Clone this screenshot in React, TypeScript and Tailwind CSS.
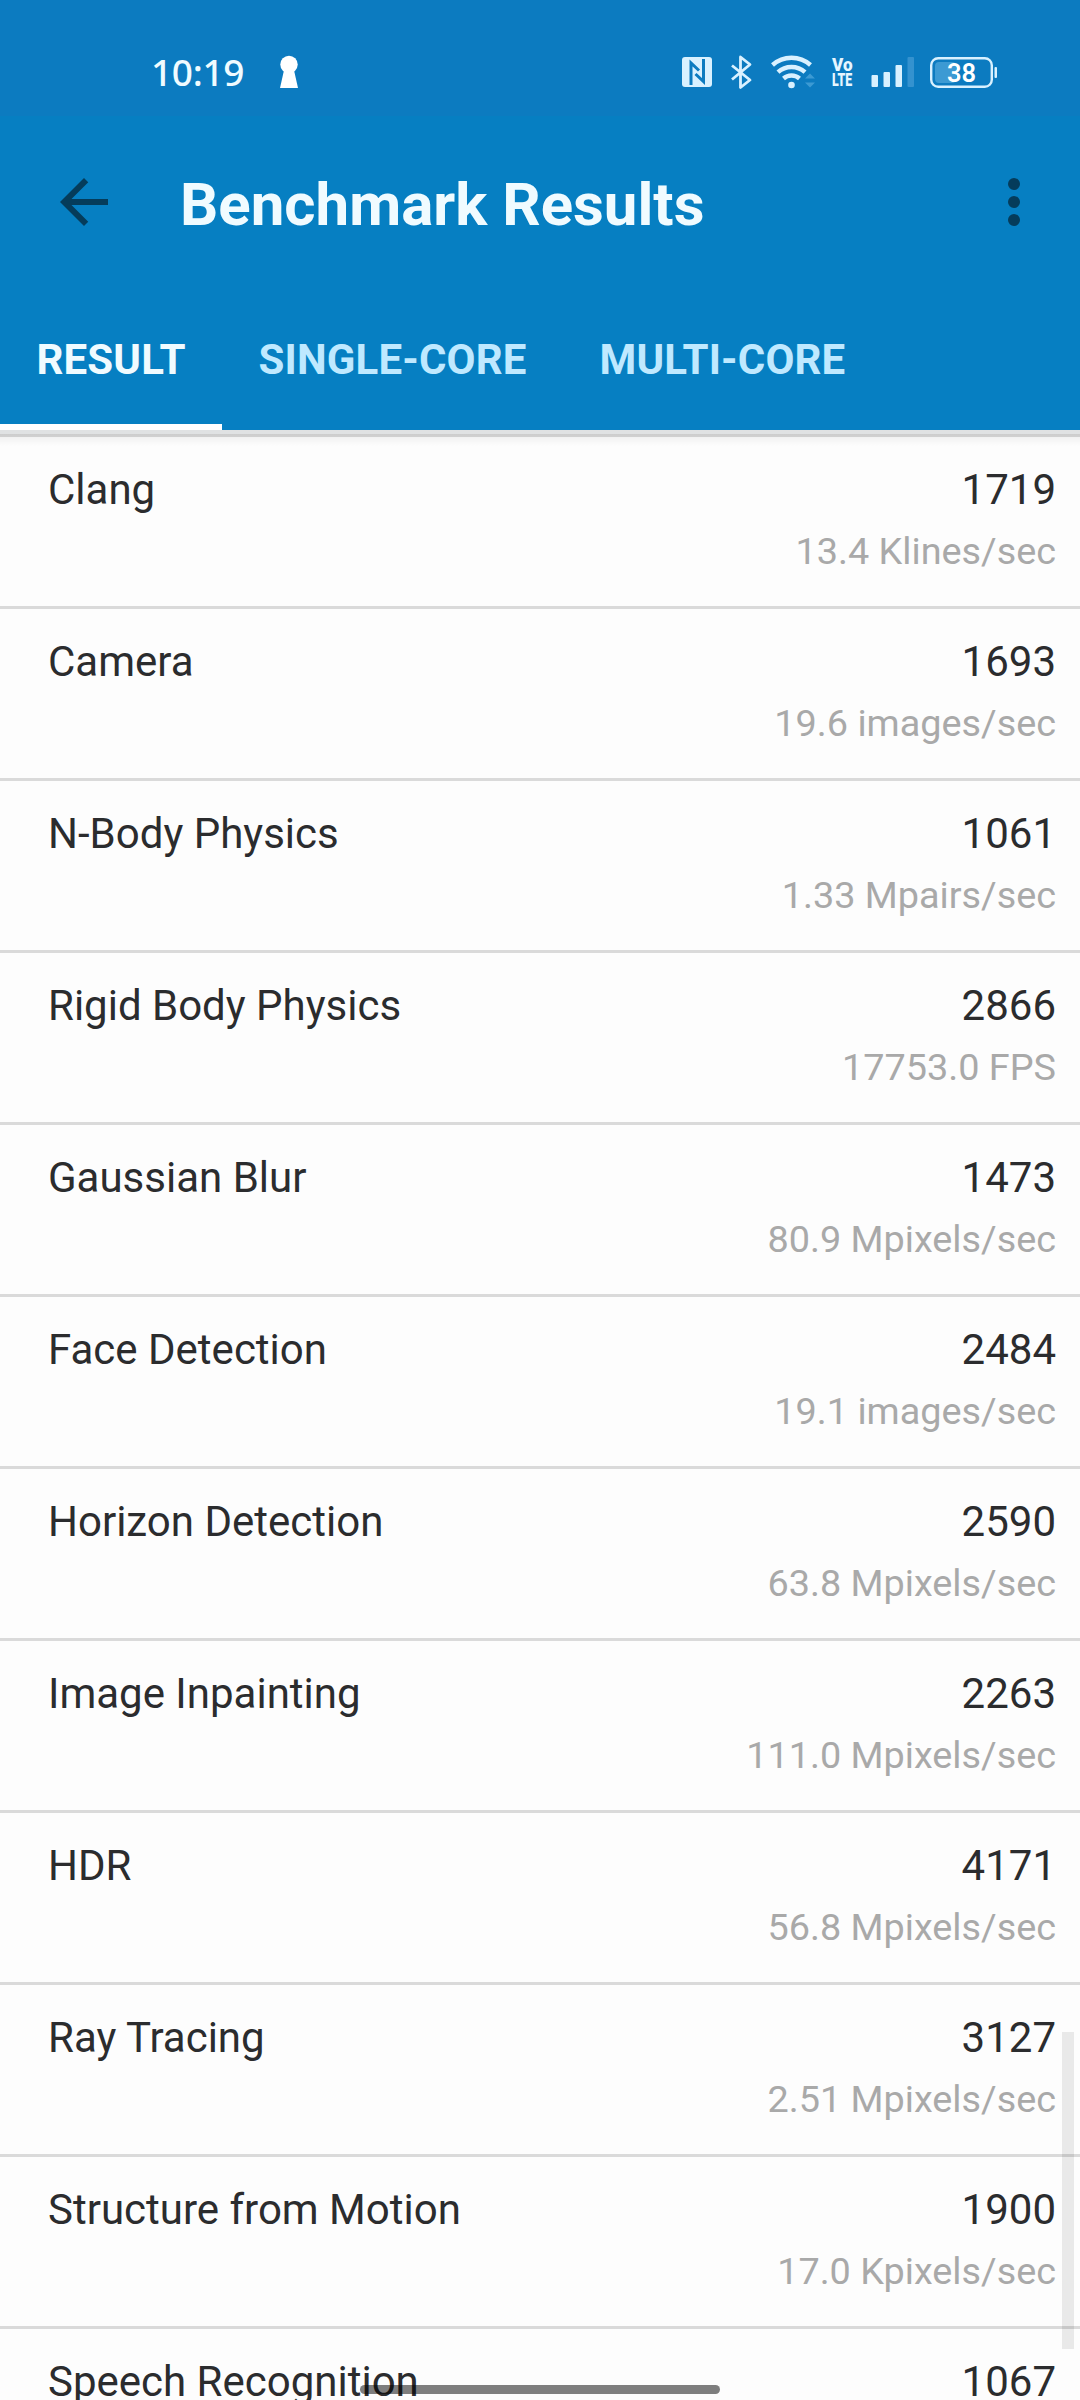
type Result = {
  name: string
  score: number
  rate: string
}

const results: Result[] = [
  { name: 'Clang', score: 1719, rate: '13.4 Klines/sec' },
  { name: 'Camera', score: 1693, rate: '19.6 images/sec' },
  { name: 'N-Body Physics', score: 1061, rate: '1.33 Mpairs/sec' },
  { name: 'Rigid Body Physics', score: 2866, rate: '17753.0 FPS' },
  { name: 'Gaussian Blur', score: 1473, rate: '80.9 Mpixels/sec' },
  { name: 'Face Detection', score: 2484, rate: '19.1 images/sec' },
  { name: 'Horizon Detection', score: 2590, rate: '63.8 Mpixels/sec' },
  { name: 'Image Inpainting', score: 2263, rate: '111.0 Mpixels/sec' },
  { name: 'HDR', score: 4171, rate: '56.8 Mpixels/sec' },
  { name: 'Ray Tracing', score: 3127, rate: '2.51 Mpixels/sec' },
  { name: 'Structure from Motion', score: 1900, rate: '17.0 Kpixels/sec' },
  { name: 'Speech Recognition', score: 1067, rate: '' },
]

const tabs = ['RESULT', 'SINGLE-CORE', 'MULTI-CORE']

function StatusBar() {
  return (
    <div className="flex h-[116px] items-start bg-[#0c7bc0] pt-[52px] pl-[151px] text-[#d9f1ff]">
      <span className="w-[129px] font-['Noto_Sans'] text-[37px] leading-[40px] font-medium tracking-[-0.3px] text-[#f0fbff]">
        10:19
      </span>
      <svg className="h-10 w-[18px] fill-white" viewBox="0 0 18 40">
        <circle cx="9" cy="12.5" r="8.7" />
        <path d="M4.5 16h9L18 36H0z" />
      </svg>

      {/* nfc */}
      <svg className="ml-[384px] h-10 w-[30px]" viewBox="0 0 30 40">
        <rect y="5" width="30" height="30" rx="3" fill="currentColor" />
        <path d="M9 33V11L17 18.500M21.500 7V29.500L13.500 22" fill="none" stroke="#0c7bc0" strokeWidth="3" />
      </svg>

      {/* bluetooth */}
      <svg className="ml-[19px] h-10 w-[22px]" viewBox="0 0 22 40">
        <path
          d="M1 13.5L19 28L9.5 35.5V5L19 12.5L1 27.5"
          fill="none"
          stroke="currentColor"
          strokeWidth="2.8"
          strokeLinejoin="round"
        />
      </svg>

      {/* wifi */}
      <svg className="ml-[17px] h-10 w-12" viewBox="0 0 48 40">
        <g fill="none" stroke="currentColor" strokeWidth="4.4">
          <path d="M2.5 13A28.5 28.5 0 0 1 40.5 13" />
          <path d="M8 20.2A20 20 0 0 1 35 20.2" />
          <path d="M13.5 26.5A12 12 0 0 1 29.5 26.5" />
        </g>
        <circle cx="21.5" cy="33" r="3.3" fill="currentColor" />
        <path d="M35 26.5L40 21.5L45 26.5zM35 30.5L40 35.5L45 30.5z" fill="#3c9ad3" />
      </svg>

      {/* volte */}
      <div className="ml-[14px] flex h-10 w-[22px] flex-col pt-[5px] text-[19px] leading-[15px] font-black text-[#e6f6ff]">
        <span className="origin-left scale-x-90">Vo</span>
        <span className="origin-left scale-x-[0.65]">LTE</span>
      </div>

      {/* signal */}
      <svg className="ml-[17px] h-10 w-[43px]" viewBox="0 0 43 40" fill="currentColor">
        <rect x="0.5" y="23" width="6.5" height="12" rx="1" />
        <rect x="12.5" y="20" width="6.5" height="15" rx="1" />
        <rect x="24.5" y="13" width="6.5" height="22" rx="1" />
        <rect x="36.5" y="5" width="6.5" height="30" rx="1" fill="#3492cf" />
      </svg>

      {/* battery */}
      <svg className="ml-[16px] h-10 w-[68px]" viewBox="0 0 68 40">
        <rect x="5" y="10" width="21" height="21" rx="4" fill="#3c9ad3" />
        <rect x="1.2" y="6.2" width="60.6" height="28.6" rx="7" fill="none" stroke="currentColor" strokeWidth="2.4" />
        <rect x="64.5" y="15" width="2.5" height="11" rx="1" fill="currentColor" />
        <text x="31.5" y="29.5" fontSize="25.5" textAnchor="middle" className="fill-white font-semibold">
          38
        </text>
      </svg>
    </div>
  )
}

function AppBar() {
  return (
    <div className="flex h-[172px] items-center bg-[#067fc2] pr-[30px] pl-12">
      <svg className="size-[72px] fill-[#053c5b]" viewBox="0 0 24 24">
        <path d="M20 11H7.83l5.59-5.59L12 4l-8 8 8 8 1.41-1.41L7.83 13H20v-2z" />
      </svg>
      <h1 className="mt-[5px] ml-[60px] flex-1 text-[60px] leading-[70px] font-bold text-[#f0fbff]">
        Benchmark Results
      </h1>
      <svg className="size-[72px] fill-[#053c5b]" viewBox="0 0 24 24">
        <circle cx="12" cy="6" r="2" />
        <circle cx="12" cy="12" r="2" />
        <circle cx="12" cy="18" r="2" />
      </svg>
    </div>
  )
}

function TabBar() {
  return (
    <div className="flex h-[142px] bg-[#067fc2] text-[42px] leading-[50px] font-bold tracking-[0.15px]">
      {tabs.map((tab, i) => (
        <div
          key={tab}
          className={
            i === 0
              ? 'border-b-[6px] border-white px-[36.5px] pt-[47px] text-[#f0fbff]'
              : 'px-[36.5px] pt-[47px] text-[#bfe9ff]'
          }
        >
          {tab}
        </div>
      ))}
    </div>
  )
}

function ResultRow({ name, score, rate }: Result) {
  return (
    <li className="flex h-[172px] justify-between border-t-[3px] border-[#dadada] pt-7 pr-6 pl-12 text-[42px] leading-[50px] text-[#2b2c2e]">
      <span>{name}</span>
      <div className="text-right">
        <div>{score}</div>
        <div className="mt-[13px] text-[37.8px] leading-[46px] text-[#a9a9a9]">{rate}</div>
      </div>
    </li>
  )
}

export default function App() {
  return (
    <div className="relative h-[2400px] w-[1080px] overflow-hidden bg-[#fdfdfd] font-[Roboto,sans-serif]">
      <header>
        <StatusBar />
        <AppBar />
        <TabBar />
      </header>
      <div className="h-1 bg-[#e0e2e3]" />
      <ul>
        {results.map((r) => (
          <ResultRow key={r.name} {...r} />
        ))}
      </ul>

      {/* drop shadow of the header over the first row */}
      <div className="absolute top-[434px] left-0 h-3 w-full bg-linear-to-b from-black/6 to-transparent" />
      {/* scrollbar */}
      <div className="absolute top-[2032px] left-[1062px] h-[317px] w-3 bg-black/8" />
      {/* gesture bar */}
      <div className="absolute top-[2385px] left-[360px] h-[9px] w-[360px] rounded-full bg-black/50" />
    </div>
  )
}
